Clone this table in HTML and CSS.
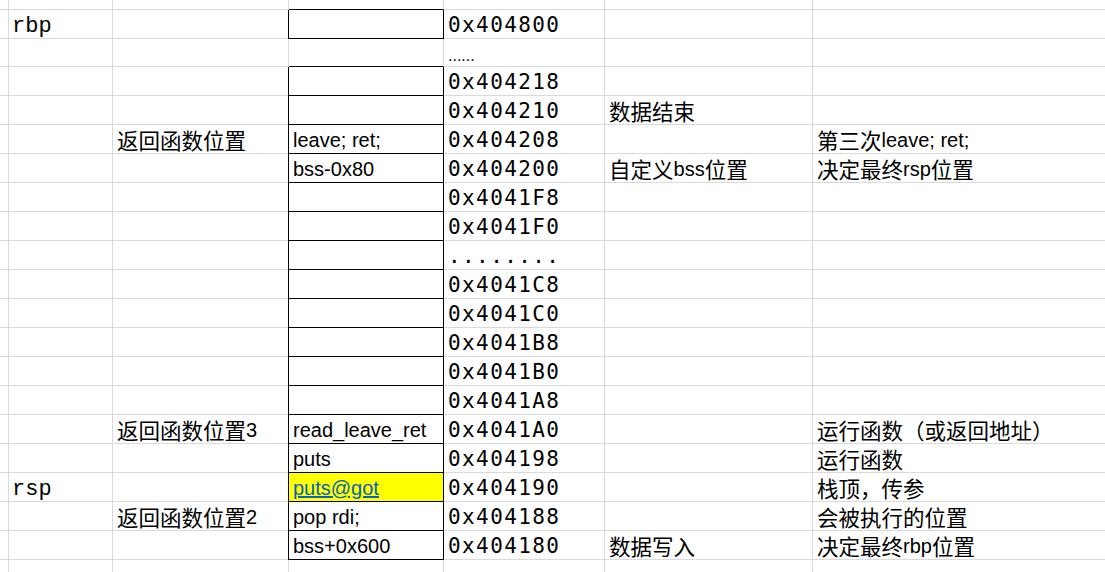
FILE: index.html
```html
<!DOCTYPE html>
<html lang="zh">
<head>
<meta charset="utf-8">
<title>stack layout</title>
<link rel="stylesheet" href="styles.css">
</head>
<body>
<div class="sheet">
  <div class="row top"><div class="c"></div><div class="c"></div><div class="c"></div><div class="c bt"></div><div class="c"></div><div class="c"></div><div class="c"></div></div>

  <div class="row"><div class="c"></div><div class="c reg">rbp</div><div class="c"></div><div class="c bx"></div><div class="c hex">0x404800</div><div class="c"></div><div class="c"></div></div>
  <div class="row short"><div class="c"></div><div class="c"></div><div class="c"></div><div class="c bt"></div><div class="c dots">......</div><div class="c"></div><div class="c"></div></div>
  <div class="row"><div class="c"></div><div class="c"></div><div class="c"></div><div class="c bx"></div><div class="c hex">0x404218</div><div class="c"></div><div class="c"></div></div>
  <div class="row"><div class="c"></div><div class="c"></div><div class="c"></div><div class="c bx"></div><div class="c hex">0x404210</div><div class="c txt"><span class="zh">数据结束</span></div><div class="c"></div></div>
  <div class="row"><div class="c"></div><div class="c"></div><div class="c txt"><span class="zh">返回函数位置</span></div><div class="c bx txt">leave; ret;</div><div class="c hex">0x404208</div><div class="c"></div><div class="c txt"><span class="zh">第三次</span>leave; ret;</div></div>
  <div class="row"><div class="c"></div><div class="c"></div><div class="c"></div><div class="c bx txt">bss-0x80</div><div class="c hex">0x404200</div><div class="c txt"><span class="zh">自定义</span>bss<span class="zh">位置</span></div><div class="c txt"><span class="zh">决定最终</span>rsp<span class="zh">位置</span></div></div>
  <div class="row"><div class="c"></div><div class="c"></div><div class="c"></div><div class="c bx"></div><div class="c hex">0x4041F8</div><div class="c"></div><div class="c"></div></div>
  <div class="row"><div class="c"></div><div class="c"></div><div class="c"></div><div class="c bx"></div><div class="c hex">0x4041F0</div><div class="c"></div><div class="c"></div></div>
  <div class="row"><div class="c"></div><div class="c"></div><div class="c"></div><div class="c bx"></div><div class="c hex">........</div><div class="c"></div><div class="c"></div></div>
  <div class="row"><div class="c"></div><div class="c"></div><div class="c"></div><div class="c bx"></div><div class="c hex">0x4041C8</div><div class="c"></div><div class="c"></div></div>
  <div class="row"><div class="c"></div><div class="c"></div><div class="c"></div><div class="c bx"></div><div class="c hex">0x4041C0</div><div class="c"></div><div class="c"></div></div>
  <div class="row"><div class="c"></div><div class="c"></div><div class="c"></div><div class="c bx"></div><div class="c hex">0x4041B8</div><div class="c"></div><div class="c"></div></div>
  <div class="row"><div class="c"></div><div class="c"></div><div class="c"></div><div class="c bx"></div><div class="c hex">0x4041B0</div><div class="c"></div><div class="c"></div></div>
  <div class="row"><div class="c"></div><div class="c"></div><div class="c"></div><div class="c bx"></div><div class="c hex">0x4041A8</div><div class="c"></div><div class="c"></div></div>
  <div class="row"><div class="c"></div><div class="c"></div><div class="c txt"><span class="zh">返回函数位置</span>3</div><div class="c bx txt">read_leave_ret</div><div class="c hex">0x4041A0</div><div class="c"></div><div class="c txt"><span class="zh">运行函数（或返回地址）</span></div></div>
  <div class="row"><div class="c"></div><div class="c"></div><div class="c"></div><div class="c bx txt">puts</div><div class="c hex">0x404198</div><div class="c"></div><div class="c txt"><span class="zh">运行函数</span></div></div>
  <div class="row"><div class="c"></div><div class="c reg">rsp</div><div class="c"></div><div class="c bx txt yel"><a class="link" href="#">puts@got</a></div><div class="c hex">0x404190</div><div class="c"></div><div class="c txt"><span class="zh">栈顶，传参</span></div></div>
  <div class="row"><div class="c"></div><div class="c"></div><div class="c txt"><span class="zh">返回函数位置</span>2</div><div class="c bx txt">pop rdi;</div><div class="c hex">0x404188</div><div class="c"></div><div class="c txt"><span class="zh">会被执行的位置</span></div></div>
  <div class="row"><div class="c"></div><div class="c"></div><div class="c"></div><div class="c bx txt">bss+0x600</div><div class="c hex">0x404180</div><div class="c txt"><span class="zh">数据写入</span></div><div class="c txt"><span class="zh">决定最终</span>rbp<span class="zh">位置</span></div></div>

  <div class="row rest"><div class="c"></div><div class="c"></div><div class="c"></div><div class="c"></div><div class="c"></div><div class="c"></div><div class="c"></div></div>
</div>
</body>
</html>
```

FILE: styles.css
```css
html, body {
  margin: 0;
  padding: 0;
  background: #ffffff;
}

.sheet {
  width: 1105px;
  height: 572px;
  overflow: hidden;
  display: flex;
  flex-direction: column;
}

.row {
  display: grid;
  grid-template-columns: 9px 104px 176px 155px 161px 208px 1fr;
  height: 29px;
  flex: none;
}

.row.top { height: 10px; }
.row.short { height: 28px; }
.row.rest { height: 20px; }

.c {
  box-sizing: border-box;
  border-right: 1px solid #dadada;
  border-bottom: 1px solid #dadada;
  display: flex;
  align-items: flex-end;
  padding-left: 4px;
  white-space: nowrap;
  overflow: hidden;
  color: #000;
}

.c:last-child { border-right: none; }

.bt { border-bottom-color: #000; }

.bx {
  border-right-color: #000;
  border-bottom-color: #000;
  box-shadow: -1px 0 0 #000;
}

.yel { background: #ffff00; }

.txt {
  font-family: "Liberation Sans", "Noto Sans CJK SC", sans-serif;
  font-size: 20px;
  line-height: 24px;
  padding-bottom: 1px;
}

.zh {
  font-family: "Noto Sans CJK SC", sans-serif;
  font-size: 21.5px;
}

.hex {
  font-family: "DejaVu Sans Mono", monospace;
  font-size: 21px;
  letter-spacing: 1.4px;
  line-height: 24px;
  padding-bottom: 1px;
}

.dots {
  font-family: "Liberation Sans", sans-serif;
  font-size: 16px;
  line-height: 20px;
  padding-bottom: 0;
}

.reg {
  font-family: "Liberation Mono", monospace;
  font-size: 22px;
  line-height: 22px;
  padding-left: 3px;
  padding-bottom: 0;
}

.link {
  color: #0563c1;
  text-decoration: underline;
}
```
